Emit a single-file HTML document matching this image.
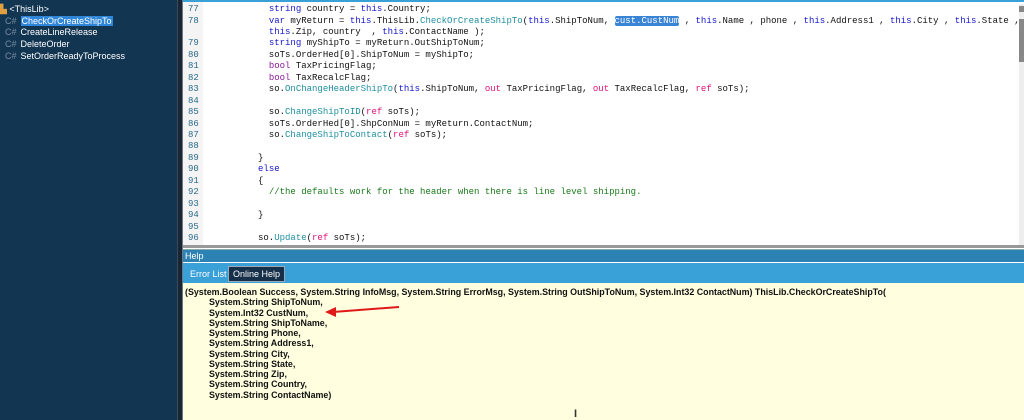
<!DOCTYPE html>
<html><head><style>
*{margin:0;padding:0;box-sizing:border-box}
body{width:1024px;height:420px;overflow:hidden;background:#fff;position:relative;font-family:"Liberation Sans",sans-serif}
#left{position:absolute;left:0;top:0;width:177px;height:420px;background:#123552;color:#fff;font-size:9px}
#sep{position:absolute;left:177px;top:0;width:6px;height:420px;background:#1a2633;border-left:1px solid #3a4a5a;border-right:1px solid #6a7a8a}
.it{position:absolute;height:11px;line-height:11px;white-space:nowrap}
.cs{color:#7a8ca0;margin-right:4px}
#code{position:absolute;left:183px;top:0;width:841px;height:246px;background:#fff;border-top:2px solid #3aa0d8;overflow:hidden}
#nums{position:absolute;left:0;top:0;width:20px;height:246px;background:#f4f4f4}
.ln{position:absolute;left:0;width:841px;height:11.45px;font-family:"Liberation Mono",monospace;font-size:9px;line-height:11.45px;white-space:pre;color:#111}
.ln .n{display:inline-block;width:20px;text-align:left;padding-left:5px;color:#2b6a8a}
.ln .t{position:absolute;left:21px}
.k{color:#1515d0}.p{color:#8a1a9a}.m{color:#1f8fa0}.r{color:#e0107a}.c{color:#1a7a1a}
.sel{background:#3a84d6;color:#fff;border-radius:2px}
#vs{position:absolute;right:0;top:2px;width:5px;height:244px;background:#eee}
#help{position:absolute;left:183px;top:246px;width:841px;height:174px}
#hb{position:absolute;left:0;top:3px;width:841px;height:13px;background:#2d82b4;color:#fff;font-size:9px;line-height:13px;padding-left:2px;border-top:1px solid #8aa}
#tabs{position:absolute;left:0;top:17px;width:841px;height:20px;background:#3aa0d8}
.tab{position:absolute;top:3px;height:16px;font-size:9px;line-height:16px;color:#fff;padding:0 4px}
#hc{position:absolute;left:0;top:37px;width:841px;height:137px;background:#fffedf;font-size:8.9px;font-weight:bold;color:#111}
.hl{position:absolute;white-space:nowrap;line-height:10px}
</style></head><body>
<div id="left">
<div class="it" style="left:0;top:4px"><span style="color:#e0a040">▙</span> &lt;ThisLib&gt;</div>
<div class="it" style="left:5px;top:16px"><span class="cs">C#</span><span style="background:#2f86d8;padding:0 1px">CheckOrCreateShipTo</span></div>
<div class="it" style="left:5px;top:27px"><span class="cs">C#</span>CreateLineRelease</div>
<div class="it" style="left:5px;top:39px"><span class="cs">C#</span>DeleteOrder</div>
<div class="it" style="left:5px;top:51px"><span class="cs">C#</span>SetOrderReadyToProcess</div>
</div>
<div id="sep"></div>
<div id="code">
<div id="nums"></div>
<div class="ln" style="top:2px"><span class="n">77</span><span class="t">            <span class="k">string</span> country = <span class="k">this</span>.Country;</span></div>
<div class="ln" style="top:13.5px"><span class="n">78</span><span class="t">            <span class="k">var</span> myReturn = <span class="k">this</span>.ThisLib.<span class="m">CheckOrCreateShipTo</span>(<span class="k">this</span>.ShipToNum, <span class="sel">cust.CustNum</span> , <span class="k">this</span>.Name , phone , <span class="k">this</span>.Address1 , <span class="k">this</span>.City , <span class="k">this</span>.State ,</span></div>
<div class="ln" style="top:25px"><span class="n"></span><span class="t">            <span class="k">this</span>.Zip, country  , <span class="k">this</span>.ContactName );</span></div>
<div class="ln" style="top:36.4px"><span class="n">79</span><span class="t">            <span class="k">string</span> myShipTo = myReturn.OutShipToNum;</span></div>
<div class="ln" style="top:47.8px"><span class="n">80</span><span class="t">            soTs.OrderHed[0].ShipToNum = myShipTo;</span></div>
<div class="ln" style="top:59.3px"><span class="n">81</span><span class="t">            <span class="p">bool</span> TaxPricingFlag;</span></div>
<div class="ln" style="top:70.7px"><span class="n">82</span><span class="t">            <span class="p">bool</span> TaxRecalcFlag;</span></div>
<div class="ln" style="top:82.2px"><span class="n">83</span><span class="t">            so.<span class="m">OnChangeHeaderShipTo</span>(<span class="k">this</span>.ShipToNum, <span class="r">out</span> TaxPricingFlag, <span class="r">out</span> TaxRecalcFlag, <span class="r">ref</span> soTs);</span></div>
<div class="ln" style="top:93.6px"><span class="n">84</span></div>
<div class="ln" style="top:105px"><span class="n">85</span><span class="t">            so.<span class="m">ChangeShipToID</span>(<span class="r">ref</span> soTs);</span></div>
<div class="ln" style="top:116.5px"><span class="n">86</span><span class="t">            soTs.OrderHed[0].ShpConNum = myReturn.ContactNum;</span></div>
<div class="ln" style="top:128px"><span class="n">87</span><span class="t">            so.<span class="m">ChangeShipToContact</span>(<span class="r">ref</span> soTs);</span></div>
<div class="ln" style="top:139.4px"><span class="n">88</span></div>
<div class="ln" style="top:150.8px"><span class="n">89</span><span class="t">          }</span></div>
<div class="ln" style="top:162.3px"><span class="n">90</span><span class="t">          <span class="k">else</span></span></div>
<div class="ln" style="top:173.7px"><span class="n">91</span><span class="t">          {</span></div>
<div class="ln" style="top:185.2px"><span class="n">92</span><span class="t">            <span class="c">//the defaults work for the header when there is line level shipping.</span></span></div>
<div class="ln" style="top:196.6px"><span class="n">93</span></div>
<div class="ln" style="top:208px"><span class="n">94</span><span class="t">          }</span></div>
<div class="ln" style="top:219.5px"><span class="n">95</span></div>
<div class="ln" style="top:231px"><span class="n">96</span><span class="t">          so.<span class="m">Update</span>(<span class="r">ref</span> soTs);</span></div>
<div id="vs"><div style="position:absolute;left:0;top:2px;width:5px;height:6px;background:#888"></div><div style="position:absolute;left:0;top:15px;width:5px;height:43px;background:#888"></div></div>
</div>
<div style="position:absolute;left:183px;top:245px;width:841px;height:3px;background:#999"></div>
<div id="help">
<div id="hb">Help</div>
<div id="tabs">
<div class="tab" style="left:3px">Error List</div>
<div class="tab" style="left:45px;background:#16304a;border:1px solid #9ab;line-height:14px">Online Help</div>
</div>
<div id="hc">
<div class="hl" style="left:2px;top:4px">(System.Boolean Success, System.String InfoMsg, System.String ErrorMsg, System.String OutShipToNum, System.Int32 ContactNum) ThisLib.CheckOrCreateShipTo(</div>
<div class="hl" style="left:26px;top:14px">System.String ShipToNum,</div>
<div class="hl" style="left:26px;top:24.5px">System.Int32 CustNum,</div>
<div class="hl" style="left:26px;top:34.8px">System.String ShipToName,</div>
<div class="hl" style="left:26px;top:45px">System.String Phone,</div>
<div class="hl" style="left:26px;top:55.3px">System.String Address1,</div>
<div class="hl" style="left:26px;top:65.5px">System.String City,</div>
<div class="hl" style="left:26px;top:75.8px">System.String State,</div>
<div class="hl" style="left:26px;top:86px">System.String Zip,</div>
<div class="hl" style="left:26px;top:96.3px">System.String Country,</div>
<div class="hl" style="left:26px;top:106.5px">System.String ContactName)</div>
<svg style="position:absolute;left:140px;top:20px" width="80" height="16"><line x1="76" y1="4" x2="10" y2="9" stroke="#e01818" stroke-width="2"/><polygon points="2,9 13,4 13,14" fill="#e01818"/></svg>
<div style="position:absolute;left:391px;top:125px;font-size:11px;color:#333">I</div>
</div>
</div>
</body></html>
